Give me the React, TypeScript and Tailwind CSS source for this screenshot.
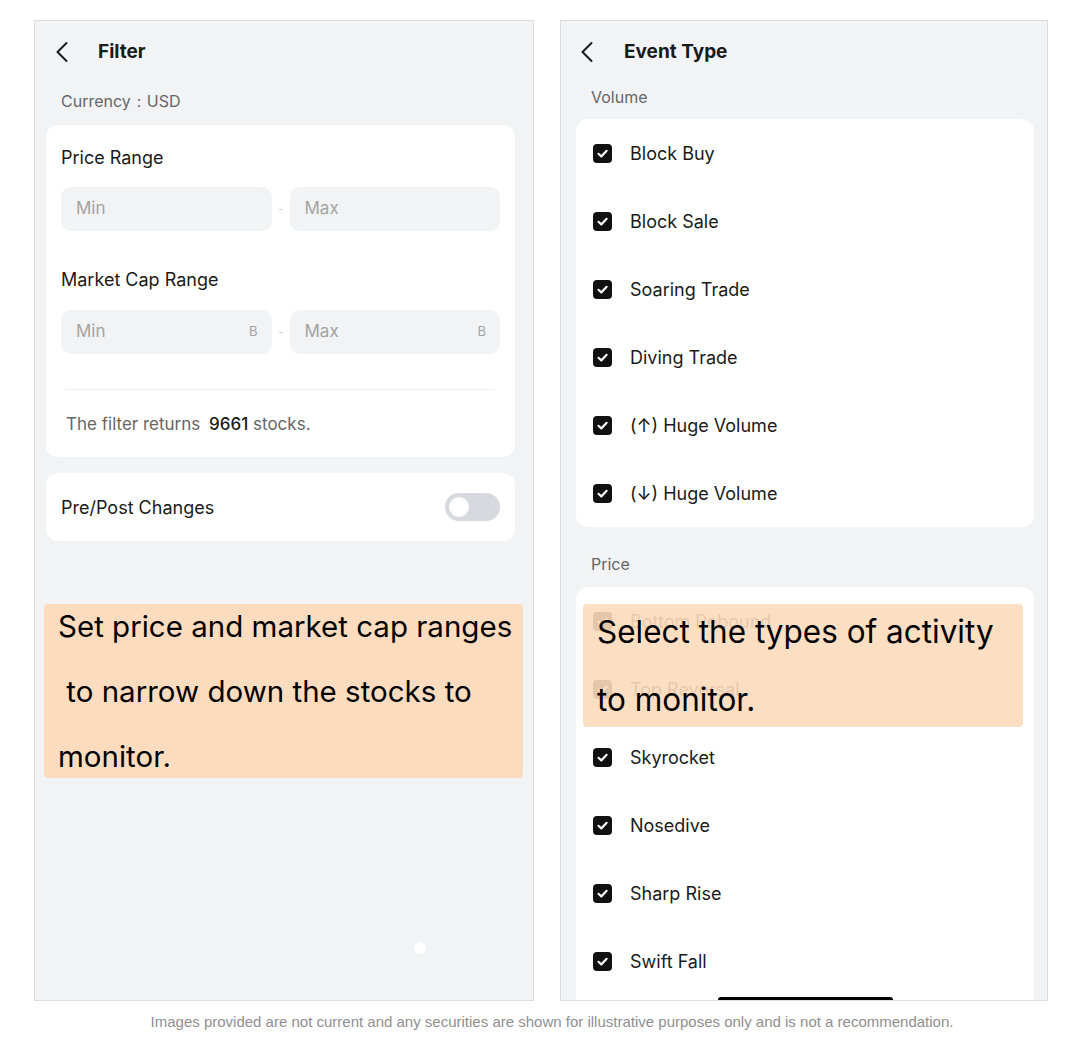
const FONT = "font-['Inter','Noto_Sans',sans-serif]";

const VOLUME = ["Block Buy", "Block Sale", "Soaring Trade", "Diving Trade", "(↑) Huge Volume", "(↓) Huge Volume"];
const PRICE = ["Bottom Rebound", "Top Reversal", "Skyrocket", "Nosedive", "Sharp Rise", "Swift Fall"];

function Chevron() {
  return (
    <svg width="14" height="22" viewBox="0 0 14 22" fill="none">
      <path d="M11.5 2 L2.5 11 L11.5 20" stroke="#1a1a1a" strokeWidth="2" strokeLinecap="round" strokeLinejoin="round" />
    </svg>
  );
}

function Header({ title, gap }: { title: string; gap: string }) {
  return (
    <div className={`h-[62px] flex items-center ${gap}`}>
      <Chevron />
      <span className="text-[19px] font-bold text-[#1a1a1a]">{title}</span>
    </div>
  );
}

function Check() {
  return (
    <span className="w-[19px] h-[19px] rounded-[4px] bg-[#111] flex items-center justify-center shrink-0">
      <svg width="13" height="13" viewBox="0 0 13 13" fill="none">
        <path d="M2.5 6.8 L5.3 9.4 L10.6 3.8" stroke="white" strokeWidth="2.2" strokeLinecap="round" strokeLinejoin="round" />
      </svg>
    </span>
  );
}

function Row({ label }: { label: string }) {
  return (
    <div className="h-[68px] flex items-center gap-[18px] pl-[17px]">
      <Check />
      <span className="text-[18px] text-[#1a1a1a]">{label}</span>
    </div>
  );
}

function RangeInput({ placeholder, unit }: { placeholder: string; unit?: string }) {
  return (
    <div className="flex-1 h-[44px] rounded-[10px] bg-[#f2f3f5] flex items-center justify-between pl-[15px] pr-[14px]">
      <span className="text-[17px] text-[#a3a3a3]">{placeholder}</span>
      {unit && <span className="text-[13px] text-[#a3a3a3]">{unit}</span>}
    </div>
  );
}

function Range({ unit }: { unit?: string }) {
  return (
    <div className="flex items-center">
      <RangeInput placeholder="Min" unit={unit} />
      <span className="w-[18px] text-center text-[10px] text-[#c4c4c4]">-</span>
      <RangeInput placeholder="Max" unit={unit} />
    </div>
  );
}

function FilterPanel() {
  return (
    <div className="relative w-[500px] h-[981px] border border-[#dcdcdc] bg-[#f2f3f5] overflow-hidden">
      <div className="pl-[20px]">
        <Header title="Filter" gap="gap-[29px]" />
      </div>
      <div className="h-[36px] flex items-center pl-[26px] text-[16px] text-[#666]">Currency：USD</div>
      <div className="ml-[11px] mt-[6px] w-[469px] rounded-[12px] bg-white px-[15px] pt-[21px] pb-[21px]">
        <div className="text-[18px] leading-[24px] text-[#1a1a1a]">Price Range</div>
        <div className="mt-[17px]">
          <Range />
        </div>
        <div className="mt-[37px] text-[18px] leading-[24px] text-[#1a1a1a]">Market Cap Range</div>
        <div className="mt-[18px]">
          <Range unit="B" />
        </div>
        <div className="mt-[35px] mx-[5px] h-px bg-[#f0f0f0]" />
        <div className="mt-[22px] pl-[5px] text-[17px] leading-[24px] text-[#666]">
          The filter returns <span className="ml-[4px] font-medium text-[#1a1a1a]">9661</span> stocks.
        </div>
      </div>
      <div className="ml-[11px] mt-[16px] w-[469px] h-[68px] rounded-[12px] bg-white flex items-center justify-between px-[15px]">
        <span className="text-[18px] text-[#1a1a1a]">Pre/Post Changes</span>
        <span className="w-[55px] h-[28px] rounded-full bg-[#d6d9dd] flex items-center pl-[4px]">
          <span className="w-[20px] h-[20px] rounded-full bg-white" />
        </span>
      </div>
      <span className="absolute left-[379px] top-[921px] w-[12px] h-[12px] rounded-full bg-white" />
      <div className="absolute left-[9px] top-[583px] w-[479px] h-[174px] rounded-[4px] bg-[#fcdcbf] flex items-center pl-[14px]">
        <p className="text-[29.5px] leading-[65px] text-black whitespace-nowrap">
          Set price and market cap ranges
          <br />
          &nbsp;to narrow down the stocks to
          <br />
          monitor.
        </p>
      </div>
    </div>
  );
}

function EventPanel() {
  return (
    <div className="relative w-[488px] h-[981px] border border-[#dcdcdc] bg-[#f2f3f5] overflow-hidden">
      <div className="pl-[19px]">
        <Header title="Event Type" gap="gap-[30px]" />
      </div>
      <div className="h-[28px] flex items-center pl-[30px] text-[16px] text-[#666]">Volume</div>
      <div className="ml-[15px] mt-[8px] w-[458px] rounded-[12px] bg-white">
        {VOLUME.map((v) => (
          <Row key={v} label={v} />
        ))}
      </div>
      <div className="mt-[22px] h-[30px] flex items-center pl-[30px] text-[16px] text-[#666]">Price</div>
      <div className="ml-[15px] mt-[8px] w-[458px] rounded-t-[12px] bg-white pb-[30px]">
        {PRICE.map((v) => (
          <Row key={v} label={v} />
        ))}
      </div>
      <span className="absolute left-[157px] bottom-[-3px] w-[175px] h-[6px] rounded-full bg-black" />
      <div className="absolute left-[22px] top-[583px] w-[440px] h-[123px] rounded-[4px] bg-[rgba(252,218,188,0.9)] flex items-center pl-[14px]">
        <p className="text-[31.5px] leading-[68px] text-black whitespace-nowrap">
          Select the types of activity
          <br />
          to monitor.
        </p>
      </div>
    </div>
  );
}

export default function App() {
  return (
    <div className={`w-[1080px] h-[1052px] bg-white ${FONT}`}>
      <div className="flex gap-[26px] pl-[34px] pt-[20px]">
        <FilterPanel />
        <EventPanel />
      </div>
      <p className="mt-[10px] pl-[24px] text-center text-[15px] leading-[22px] text-[#8f8f8f] font-['Liberation_Sans_Narrow','Liberation_Sans',sans-serif]">
        Images provided are not current and any securities are shown for illustrative purposes only and is not a recommendation.
      </p>
    </div>
  );
}
